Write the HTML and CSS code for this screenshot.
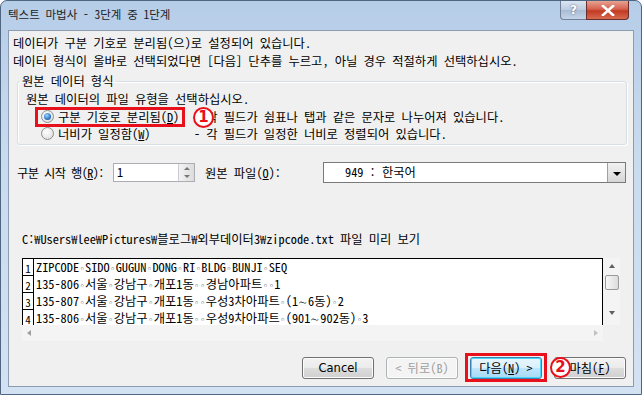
FILE: index.html
```html
<!DOCTYPE html>
<html lang="ko">
<head>
    <meta charset="UTF-8">
    <title>텍스트 마법사 - 3단계 중 1단계</title>
    <link rel="stylesheet" href="styles.css">
</head>
<body>
    <div class="window">
        <div class="titlebar">
            <span class="title">텍스트 마법사 - 3단계 중 1단계</span>
            <div class="caption-btns">
                <span class="btn-help">?</span>
                <span class="btn-close">
                    <svg width="14" height="11" viewBox="0 0 14 11">
                        <path d="M2 1 L12 10 M12 1 L2 10" stroke="#fff" stroke-width="2.6" stroke-linecap="square"/>
                    </svg>
                </span>
            </div>
        </div>

        <div class="client">
            <p class="intro">데이터가 구분 기호로 분리됨(으)로 설정되어 있습니다.</p>
            <p class="intro">데이터 형식이 올바로 선택되었다면 [다음] 단추를 누르고, 아닐 경우 적절하게 선택하십시오.</p>

            <fieldset class="group">
                <legend>원본 데이터 형식</legend>
                <div class="prompt">원본 데이터의 파일 유형을 선택하십시오.</div>
                <div class="choice">
                    <span class="radio checked"></span>
                    <span class="choice-label">구분 기호로 분리됨(<u>D</u>)</span>
                    <span class="choice-desc">- 각 필드가 쉼표나 탭과 같은 문자로 나누어져 있습니다.</span>
                    <span class="mark-box mark-choice"></span>
                    <span class="mark-num mark-num-1">1</span>
                </div>
                <div class="choice">
                    <span class="radio"></span>
                    <span class="choice-label">너비가 일정함(<u>W</u>)</span>
                    <span class="choice-desc">- 각 필드가 일정한 너비로 정렬되어 있습니다.</span>
                </div>
            </fieldset>

            <div class="start-row">
                <span class="row-label">구분 시작 행(<u>R</u>):</span>
                <div class="spin">
                    <span class="spin-value">1</span>
                    <span class="spin-btns">
                        <span class="spin-up"></span>
                        <span class="spin-down"></span>
                    </span>
                </div>
                <span class="origin-label">원본 파일(<u>O</u>):</span>
                <div class="combo">
                    <span class="combo-value">949 : 한국어</span>
                    <span class="combo-btn"><span class="combo-arrow"></span></span>
                </div>
            </div>

            <div class="path">C:₩Users₩lee₩Pictures₩블로그₩외부데이터3₩zipcode.txt 파일 미리 보기</div>

            <div class="preview">
                <div class="preview-main">
                    <div class="preview-text">
                        <div class="line"><span class="num">1</span><span class="data">ZIPCODE<i class="sep">◦</i>SIDO<i class="sep">◦</i>GUGUN<i class="sep">◦</i>DONG<i class="sep">◦</i>RI<i class="sep">◦</i>BLDG<i class="sep">◦</i>BUNJI<i class="sep">◦</i>SEQ</span></div>
                        <div class="line"><span class="num">2</span><span class="data">135-806<i class="sep">◦</i>서울<i class="sep">◦</i>강남구<i class="sep">◦</i>개포1동<i class="sep">◦</i><i class="sep">◦</i>경남아파트<i class="sep">◦</i><i class="sep">◦</i>1</span></div>
                        <div class="line"><span class="num">3</span><span class="data">135-807<i class="sep">◦</i>서울<i class="sep">◦</i>강남구<i class="sep">◦</i>개포1동<i class="sep">◦</i><i class="sep">◦</i>우성3차아파트<i class="sep">◦</i>(1∼6동)<i class="sep">◦</i>2</span></div>
                        <div class="line"><span class="num">4</span><span class="data">135-806<i class="sep">◦</i>서울<i class="sep">◦</i>강남구<i class="sep">◦</i>개포1동<i class="sep">◦</i><i class="sep">◦</i>우성9차아파트<i class="sep">◦</i>(901∼902동)<i class="sep">◦</i>3</span></div>
                    </div>
                    <div class="vscroll">
                        <span class="arrow-up"></span>
                        <span class="thumb"></span>
                        <span class="arrow-down"></span>
                    </div>
                </div>
                <div class="hscroll">
                    <span class="arrow-left"></span>
                    <span class="arrow-right"></span>
                </div>
            </div>

            <div class="buttons">
                <button class="btn btn-latin">Cancel</button>
                <button class="btn" disabled>&lt; 뒤로(B)</button>
                <div class="btn-wrap">
                    <button class="btn btn-default">다음(<u>N</u>) &gt;</button>
                    <span class="mark-box mark-next"></span>
                    <span class="mark-num mark-num-2">2</span>
                </div>
                <button class="btn">마침(<u>F</u>)</button>
            </div>
        </div>
    </div>
</body>
</html>
```

FILE: styles.css
```css
body {
    margin: 0;
    font-family: 'Noto Sans Mono CJK KR', 'Noto Sans CJK KR', 'Liberation Sans', sans-serif;
    font-size: 12.3px;
    color: #000;
    background: #fff;
}

.window {
    width: 642px;
    height: 395px;
    box-sizing: border-box;
    display: flex;
    flex-direction: column;
    border: 1px solid #4f6580;
    border-radius: 7px 7px 0 0;
    background: linear-gradient(to bottom, #b6cde8 0%, #c9dbef 40%, #d3e2f3 100%);
    overflow: hidden;
}

/* title bar */
.titlebar {
    height: 29px;
    display: flex;
    align-items: flex-start;
    justify-content: space-between;
    padding: 0 12px 0 7px;
}

.titlebar .title {
    margin-top: 4px;
    line-height: 18px;
    font-size: 11.5px;
    color: #1e1e1e;
}

.caption-btns {
    display: flex;
}

.btn-help,
.btn-close {
    height: 19px;
    display: flex;
    align-items: center;
    justify-content: center;
    border: 1px solid #6f819a;
    border-top: none;
    box-sizing: border-box;
}

.btn-help {
    width: 26px;
    border-radius: 0 0 0 4px;
    border-right: none;
    background: linear-gradient(to bottom, #dbe5f1 0%, #bccbe0 50%, #a9bbd4 51%, #c5d4e8 100%);
    color: #fff;
    font-family: 'DejaVu Sans', sans-serif;
    font-weight: bold;
    font-size: 12px;
    text-shadow: 0 0 2px #44536b;
}

.btn-close {
    width: 43px;
    border-radius: 0 0 4px 0;
    border-color: #6a2d2d;
    background: linear-gradient(to bottom, #e8a291 0%, #d5624f 45%, #c23a23 55%, #d66a4f 100%);
}

/* client area */
.client {
    flex: 1;
    margin: 0 7px 7px 7px;
    border: 1px solid #8a9bb2;
    background: #f0f0f0;
    padding: 3px 0 0 0;
    display: flex;
    flex-direction: column;
}

.intro {
    margin: 0;
    padding-left: 4px;
    line-height: 18px;
}

.group {
    margin: 2px 6px 0 8px;
    padding: 0 8px 2px 8px;
    border: 1px solid #d5dfe5;
    border-radius: 3px;
    box-shadow: inset 1px 1px 0 #fff, 1px 1px 0 #fff;
}

.group legend {
    padding: 0 2px;
    margin-left: -6px;
    line-height: 18px;
}

.prompt {
    line-height: 18px;
}

.choice {
    position: relative;
    display: flex;
    align-items: center;
    height: 17px;
}

.radio {
    width: 11px;
    height: 11px;
    margin: 0 4px 0 15px;
    border-radius: 50%;
    border: 1px solid #8e8f8f;
    background: radial-gradient(circle at 40% 35%, #fff 0%, #eaeaea 55%, #d0d0d0 100%);
    position: relative;
}

.radio.checked::after {
    content: "";
    position: absolute;
    left: 2px;
    top: 2px;
    width: 7px;
    height: 7px;
    border-radius: 50%;
    background: radial-gradient(circle at 40% 35%, #a3d6ff 0%, #2d7ac7 60%, #14467d 100%);
}

.choice-label {
    width: 136px;
}

/* red annotation marks */
.mark-box {
    position: absolute;
    border: 3px solid #e8101a;
    box-sizing: border-box;
}

.mark-choice {
    left: 9px;
    top: -1px;
    width: 150px;
    height: 20px;
}

.mark-num {
    position: absolute;
    width: 21px;
    height: 21px;
    box-sizing: border-box;
    border: 2.5px solid #e8101a;
    border-radius: 50%;
    background: #fff;
    color: #e8101a;
    font-family: 'DejaVu Sans', sans-serif;
    font-weight: bold;
    font-size: 15px;
    line-height: 16px;
    text-align: center;
}

.mark-num-1 {
    left: 167px;
    top: -1px;
}

/* start row */
.start-row {
    display: flex;
    align-items: center;
    margin: 17px 0 0 8px;
    height: 21px;
}

.row-label {
    width: 96px;
    letter-spacing: -0.6px;
    white-space: nowrap;
}

.spin {
    width: 82px;
    height: 19px;
    box-sizing: border-box;
    border: 1px solid #abadb3;
    background: #fff;
    display: flex;
    justify-content: space-between;
}

.spin-value {
    padding-left: 3px;
    line-height: 17px;
}

.spin-btns {
    width: 15px;
    display: flex;
    flex-direction: column;
    border-left: 1px solid #c9ccd2;
    background: linear-gradient(to right, #f3f3f3, #dcdcdc);
}

.spin-up,
.spin-down {
    flex: 1;
    display: flex;
    align-items: center;
    justify-content: center;
}

.spin-up::after {
    content: "";
    border: 3px solid transparent;
    border-bottom: 3px solid #777;
    border-top: none;
}

.spin-down::after {
    content: "";
    border: 3px solid transparent;
    border-top: 3px solid #777;
    border-bottom: none;
}

.origin-label {
    width: 118px;
    margin-left: 10px;
}

.combo {
    width: 303px;
    height: 21px;
    box-sizing: border-box;
    border: 1px solid #7a7a7a;
    background: #fff;
    display: flex;
    justify-content: space-between;
}

.combo-value {
    padding-left: 21px;
    line-height: 19px;
}

.combo-btn {
    width: 17px;
    display: flex;
    align-items: center;
    justify-content: center;
    border-left: 1px solid #a0a0a0;
    background: linear-gradient(to bottom, #f2f2f2, #d6d6d6);
}

.combo-arrow {
    border: 4px solid transparent;
    border-top: 4px solid #000;
    border-bottom: none;
    margin-top: 2px;
}

/* preview */
.path {
    margin: 47px 0 0 13px;
    line-height: 18px;
}

.preview {
    margin: 10px 0 0 13px;
    width: 598px;
    display: flex;
    flex-direction: column;
}

.preview-main {
    display: flex;
    height: 67px;
}

.preview-text {
    flex: 1;
    border: 1px solid #000;
    border-bottom: none;
    background: #fff;
    overflow: hidden;
}

.line {
    display: flex;
    height: 17px;
    align-items: stretch;
}

.line .num {
    width: 10px;
    border-right: 1px solid #000;
    border-bottom: 1px solid #000;
    text-align: center;
    font-size: 11px;
    line-height: 18px;
}

.line .data {
    padding-left: 2px;
    font-size: 12.3px;
    line-height: 17px;
    white-space: nowrap;
}

.sep {
    display: inline-block;
    width: 6px;
    font-style: normal;
    font-family: 'DejaVu Sans', sans-serif;
    font-size: 9px;
    text-align: center;
}

.vscroll {
    width: 17px;
    background: #f4f4f4;
    display: flex;
    flex-direction: column;
    align-items: center;
    padding-top: 6px;
}

.arrow-up {
    border: 3.5px solid transparent;
    border-bottom: 4px solid #606060;
    border-top: none;
}

.thumb {
    width: 14px;
    height: 15px;
    margin-top: 7px;
    box-sizing: border-box;
    border: 1px solid #9a9a9a;
    border-radius: 2px;
    background: linear-gradient(to right, #f7f7f7, #dcdcdc);
}

.arrow-down {
    margin-top: 21px;
    border: 3.5px solid transparent;
    border-top: 4px solid #606060;
    border-bottom: none;
}

.hscroll {
    height: 16px;
    width: 581px;
    background: #f4f4f4;
    display: flex;
    align-items: center;
    justify-content: space-between;
    padding: 0 5px 0 5px;
    box-sizing: border-box;
}

.arrow-left {
    border: 3.5px solid transparent;
    border-right: 4px solid #a0a0a0;
    border-left: none;
}

.arrow-right {
    border: 3.5px solid transparent;
    border-left: 4px solid #c0c0c0;
    border-right: none;
}

/* buttons */
.buttons {
    display: flex;
    justify-content: flex-end;
    gap: 12px;
    margin-top: 16px;
    padding-right: 7px;
}

.btn {
    width: 72px;
    height: 22px;
    padding: 0;
    font-family: 'Noto Sans Mono CJK KR', 'Noto Sans CJK KR', 'Liberation Sans', sans-serif;
    font-size: 12.3px;
    color: #000;
    border: 1px solid #707070;
    border-radius: 3px;
    background: linear-gradient(to bottom, #f2f2f2 0%, #ebebeb 50%, #dddddd 51%, #cfcfcf 100%);
    box-shadow: inset 0 0 0 1px #fcfcfc;
}

.btn-latin {
    font-family: 'DejaVu Sans', 'Liberation Sans', sans-serif;
    font-size: 11.5px;
}

.btn:disabled {
    color: #a0a0a0;
    border-color: #adb2b5;
    background: #f4f4f4;
}

.btn-default {
    border-color: #3c7fb1;
    background: linear-gradient(to bottom, #eaf6fd 0%, #d9f0fc 50%, #bee6fd 51%, #a7d9f5 100%);
    box-shadow: inset 0 0 0 1px #48d7fb;
}

.btn-wrap {
    position: relative;
    display: flex;
}

.mark-next {
    left: -5px;
    top: -4px;
    width: 82px;
    height: 29px;
}

.mark-num-2 {
    left: 80px;
    top: 0px;
}
```
